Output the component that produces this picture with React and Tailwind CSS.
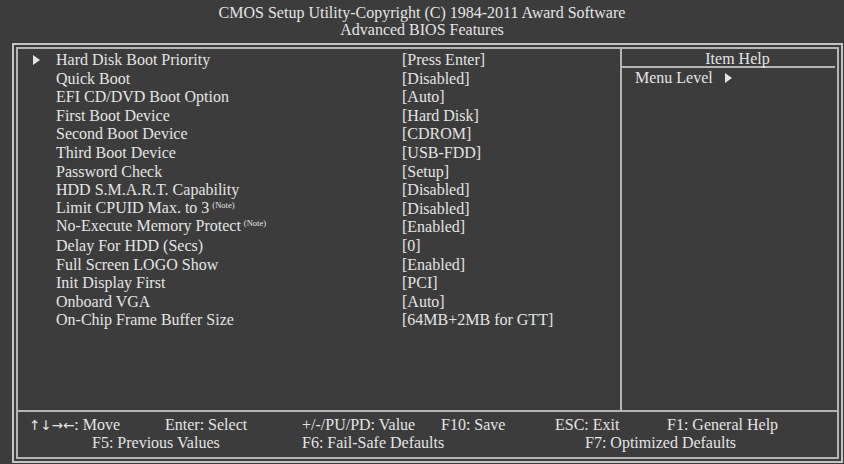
const ITEMS = [
  { label: 'Hard Disk Boot Priority', value: '[Press Enter]', sub: true },
  { label: 'Quick Boot', value: '[Disabled]' },
  { label: 'EFI CD/DVD Boot Option', value: '[Auto]' },
  { label: 'First Boot Device', value: '[Hard Disk]' },
  { label: 'Second Boot Device', value: '[CDROM]' },
  { label: 'Third Boot Device', value: '[USB-FDD]' },
  { label: 'Password Check', value: '[Setup]' },
  { label: 'HDD S.M.A.R.T. Capability', value: '[Disabled]' },
  { label: 'Limit CPUID Max. to 3', value: '[Disabled]', note: true },
  { label: 'No-Execute Memory Protect', value: '[Enabled]', note: true },
  { label: 'Delay For HDD (Secs)', value: '[0]' },
  { label: 'Full Screen LOGO Show', value: '[Enabled]' },
  { label: 'Init Display First', value: '[PCI]' },
  { label: 'Onboard VGA', value: '[Auto]' },
  { label: 'On-Chip Frame Buffer Size', value: '[64MB+2MB for GTT]' },
]

function Triangle({ className = '' }) {
  return (
    <svg width="7" height="10" viewBox="0 0 7 10" className={className}>
      <path d="M0 0 L7 5 L0 10 Z" fill="currentColor" />
    </svg>
  )
}

function ItemRow({ item }) {
  return (
    <div className="flex items-center h-[18.6px]">
      <div className="w-[38px] pl-[15px] flex items-center">
        {item.sub && <Triangle />}
      </div>
      <div className="w-[346px] whitespace-nowrap">
        {item.label}
        {item.note && (
          <span className="text-[8.5px] ml-[3px] relative -top-[5px]">(Note)</span>
        )}
      </div>
      <div className="whitespace-nowrap">{item.value}</div>
    </div>
  )
}

export default function App() {
  return (
    <div className="w-[844px] h-[464px] bg-[#3c3c3c] text-[#e4e4e4] font-['Liberation_Serif',serif] text-[16px] overflow-hidden">
      {/* title */}
      <div className="pt-[4px] h-[41px] text-center leading-[17px]">
        <div>CMOS Setup Utility-Copyright (C) 1984-2011 Award Software</div>
        <div>Advanced BIOS Features</div>
      </div>

      <div className="ml-[12px] mt-[2px] w-[831px] h-[420px] border-2 border-[#c4c4c4] p-[2px]">
        <div className="h-full border-2 border-[#b4b4b4] flex flex-col">
          <div className="flex h-[361px]">
            {/* settings list */}
            <div className="w-[604px] border-r-2 border-[#b4b4b4] pt-[2px] leading-[18.6px]">
              {ITEMS.map((item) => (
                <ItemRow key={item.label} item={item} />
              ))}
            </div>

            {/* help panel */}
            <div className="flex-1 flex flex-col">
              <div className="h-[19px] mr-[2px] border-b-2 border-[#b4b4b4] text-center pl-[18px] leading-[19px]">
                Item Help
              </div>
              <div className="pl-[13px] pt-[1px] flex items-center gap-[12px] leading-[18px]">
                <span>Menu Level</span>
                <Triangle />
              </div>
            </div>
          </div>

          {/* key legend */}
          <div className="flex-1 border-t-2 border-[#b4b4b4] pt-[4px] leading-[18px] whitespace-nowrap">
            <div className="flex">
              <span className="ml-[11px] w-[136px]">
                <span className="font-['DejaVu_Sans',sans-serif] text-[13.5px]">↑↓→←</span>: Move
              </span>
              <span className="w-[137px]">Enter: Select</span>
              <span className="w-[139px]">+/-/PU/PD: Value</span>
              <span className="w-[114px]">F10: Save</span>
              <span className="w-[112px]">ESC: Exit</span>
              <span>F1: General Help</span>
            </div>
            <div className="flex">
              <span className="ml-[74px] w-[210px]">F5: Previous Values</span>
              <span className="w-[283px]">F6: Fail-Safe Defaults</span>
              <span>F7: Optimized Defaults</span>
            </div>
          </div>
        </div>
      </div>
    </div>
  )
}
